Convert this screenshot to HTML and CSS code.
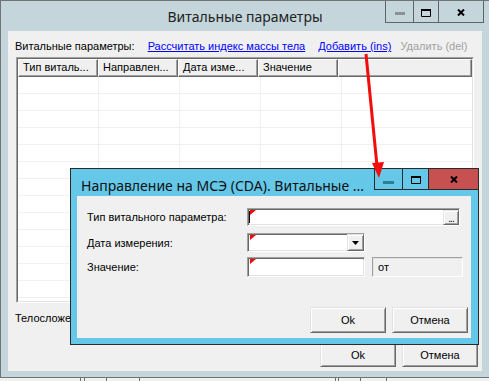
FILE: index.html
```html
<!DOCTYPE html>
<html lang="ru">
<head>
    <meta charset="UTF-8">
    <meta name="viewport" content="width=device-width, initial-scale=1.0">
    <title>Витальные параметры</title>
    <link rel="stylesheet" href="styles.css">
</head>
<body>
    <div class="window">
        <div class="titlebar">
            <div class="title">Витальные параметры</div>
            <div class="caption">
                <span class="cbtn cmin"><svg width="10" height="3"><rect width="10" height="3" fill="#8b9195"/></svg></span>
                <span class="cbtn cmax"><svg width="10" height="8"><path d="M0.5 1h9v6.5h-9z" fill="none" stroke="#000" stroke-width="1"/><rect width="10" height="2"/></svg></span>
                <span class="cbtn cclose"><svg width="8" height="7"><path d="M1 0.5l6 6M7 0.5l-6 6" stroke="#000" stroke-width="2"/></svg></span>
            </div>
        </div>

        <div class="client">
            <div class="toolbar">
                <span>Витальные параметры:</span>
                <a href="#" class="link">Рассчитать индекс массы тела</a>
                <a href="#" class="link">Добавить (ins)</a>
                <span class="disabled">Удалить (del)</span>
            </div>

            <div class="listview">
                <div class="lv-inner">
                    <div class="lv-head">
                        <div class="th">Тип виталь...</div>
                        <div class="th">Направлен...</div>
                        <div class="th">Дата изме...</div>
                        <div class="th">Значение</div>
                        <div class="th th-fill"></div>
                    </div>
                    <div class="lv-body">
                        <div class="col"></div>
                        <div class="col"></div>
                        <div class="col"></div>
                        <div class="col"></div>
                    </div>
                </div>
            </div>

            <div class="build">Телосложение:</div>

            <div class="actions">
                <button class="btn">Ok</button>
                <button class="btn">Отмена</button>
            </div>
        </div>
    </div>

    <div class="strip">
        <span style="width:80px"></span>
        <span style="width:3px"></span>
        <span style="width:21px"></span>
        <span style="width:32px"></span>
        <span style="width:195px"></span>
        <span style="width:2px"></span>
        <span style="width:21px"></span>
        <span style="width:25px"></span>
    </div>

    <div class="dialog">
        <div class="dlg-titlebar">
            <div class="dlg-title">Направление на МСЭ (CDA). Витальные ...</div>
            <div class="caption dlg-caption">
                <span class="cbtn cmin"><svg width="11" height="3"><rect width="11" height="3" fill="#2f7f98"/></svg></span>
                <span class="cbtn cmax"><svg width="10" height="8"><path d="M0.5 1h9v6.5h-9z" fill="none" stroke="#000" stroke-width="1"/><rect width="10" height="2"/></svg></span>
                <span class="cbtn cclose"><svg width="8" height="7"><path d="M1 0.5l6 6M7 0.5l-6 6" stroke="#000" stroke-width="2"/></svg></span>
            </div>
        </div>

        <div class="dlg-client">
            <div class="row r1">
                <label>Тип витального параметра:</label>
                <div class="field wide">
                    <span class="caret"></span>
                    <span class="dots">...</span>
                </div>
            </div>
            <div class="row r2">
                <label>Дата измерения:</label>
                <div class="field short">
                    <span class="drop"><svg width="7" height="4"><path d="M0 0h7l-3.5 4z"/></svg></span>
                </div>
            </div>
            <div class="row r3">
                <label>Значение:</label>
                <div class="field short"></div>
                <div class="unit">от</div>
            </div>
            <div class="dlg-actions">
                <button class="btn">Ok</button>
                <button class="btn">Отмена</button>
            </div>
        </div>
    </div>

    <svg class="arrow" width="489" height="381">
        <line x1="366" y1="54" x2="377" y2="166" stroke="#f20d0d" stroke-width="3"/>
        <path d="M372 163 L384 162 L379 178 Z" fill="#f20d0d"/>
    </svg>
</body>
</html>
```

FILE: styles.css
```css
body {
    margin: 0;
    width: 489px;
    height: 381px;
    overflow: hidden;
    position: relative;
    background-color: #f0f0f0;
    font-family: "Liberation Sans", Arial, sans-serif;
    font-size: 11px;
    color: #000;
}

.window {
    width: 490px;
    height: 378px;
    box-sizing: border-box;
    border: 1px solid #6e7477;
    background-color: #c4d6dc;
    padding: 0 7px 6px 7px;
    display: flex;
    flex-direction: column;
}

.titlebar {
    height: 30px;
    display: grid;
    flex-shrink: 0;
}

.title,
.titlebar .caption {
    grid-area: 1 / 1;
}

.title {
    text-align: center;
    font-family: "Noto Sans", sans-serif;
    font-size: 14px;
    line-height: 20px;
    padding-top: 6px;
    color: #222;
}

/* caption buttons */
.caption {
    justify-self: end;
    align-self: start;
    display: flex;
    height: 21px;
    border: 1px solid #5d6468;
    border-top: none;
    margin-right: -2px;
}

.cbtn {
    display: flex;
    justify-content: center;
    align-items: flex-start;
    border-left: 1px solid #5d6468;
}

.cbtn:first-child {
    border-left: none;
}

.cbtn svg {
    display: block;
}

.cmin {
    width: 27px;
    padding-top: 11px;
    box-sizing: border-box;
}

.cmax {
    width: 25px;
    padding-top: 8px;
    box-sizing: border-box;
}

.cclose {
    width: 45px;
    padding-top: 8px;
    box-sizing: border-box;
}

/* main client area */
.client {
    flex: 1;
    background-color: #f0f0f0;
    display: flex;
    flex-direction: column;
}

.toolbar {
    padding: 9px 0 0 7px;
    line-height: 13px;
    height: 13px;
    white-space: nowrap;
}

.toolbar .link {
    margin-left: 10px;
}

.toolbar .disabled {
    margin-left: 6px;
    color: #a0a0a0;
}

.link {
    color: #0000ff;
    text-decoration: underline;
}

.listview {
    margin: 4px 0 0 8px;
    width: 458px;
    height: 246px;
    box-sizing: border-box;
    border: 1px solid;
    border-color: #a0a0a0 #ffffff #ffffff #a0a0a0;
}

.lv-inner {
    height: 100%;
    box-sizing: border-box;
    border: 1px solid;
    border-color: #696969 #e3e3e3 #e3e3e3 #696969;
    background-color: #fff;
    display: flex;
    flex-direction: column;
}

.lv-head {
    display: flex;
    height: 18px;
    flex-shrink: 0;
}

.th {
    width: 80px;
    box-sizing: border-box;
    background-color: #f0f0f0;
    border-top: 1px solid #fff;
    border-left: 1px solid #fff;
    border-right: 1px solid #696969;
    border-bottom: 1px solid #696969;
    box-shadow: inset -1px -1px #a0a0a0;
    padding-left: 4px;
    line-height: 15px;
    white-space: nowrap;
    overflow: hidden;
}

.th-fill {
    flex: 1;
}

.lv-body {
    flex: 1;
    display: flex;
    background: repeating-linear-gradient(#fff 0 16px, #f0f0f0 16px 17px);
    background-position: 0 0;
}

.col {
    width: 80px;
    border-right: 1px solid #f0f0f0;
}

.build {
    margin: 9px 0 0 7px;
    line-height: 13px;
}

.actions {
    margin-top: 18px;
    display: flex;
    justify-content: flex-end;
    gap: 6px;
    padding-right: 4px;
}

.actions .btn {
    height: 24px;
}

.btn {
    width: 76px;
    height: 26px;
    padding: 0;
    font-family: "Liberation Sans", Arial, sans-serif;
    font-size: 11px;
    color: #000;
    background-color: #f0f0f0;
    border: 1px solid;
    border-color: #e3e3e3 #696969 #696969 #e3e3e3;
    box-shadow: inset 1px 1px #fff, inset -1px -1px #a0a0a0;
}

.strip {
    display: flex;
    height: 3px;
    background-color: #f0f0f0;
}

.strip span {
    border-right: 1px solid #6d6d6d;
}

/* dialog window */
.dialog {
    position: absolute;
    left: 70px;
    top: 168px;
    width: 409px;
    height: 177px;
    box-sizing: border-box;
    border: 1px solid #2a2a2a;
    background-color: #66c8e9;
    padding: 0 7px 6px 6px;
    display: flex;
    flex-direction: column;
}

.dlg-titlebar {
    height: 27px;
    display: grid;
    flex-shrink: 0;
}

.dlg-title,
.dlg-caption {
    grid-area: 1 / 1;
}

.dlg-title {
    font-family: "Noto Sans", sans-serif;
    font-size: 14px;
    line-height: 20px;
    padding: 7px 0 0 4px;
    white-space: nowrap;
    color: #111;
}

.dlg-caption {
    height: 20px;
    border: 1px solid #2a2a2a;
    border-right: none;
    margin: -1px -7px 0 0;
}

.dlg-caption .cbtn {
    border-color: #2a2a2a;
}

.dlg-caption .cmin {
    width: 27px;
    padding-top: 12px;
}

.dlg-caption .cmax {
    width: 26px;
    padding-top: 7px;
}

.dlg-caption .cclose {
    width: 50px;
    padding-top: 7px;
    background-color: #c75050;
}

.dlg-client {
    flex: 1;
    background-color: #f0f0f0;
    display: flex;
    flex-direction: column;
}

.row {
    display: flex;
    align-items: center;
    padding-left: 10px;
}

.row label {
    width: 160px;
    flex-shrink: 0;
}

.r1 {
    margin-top: 12px;
    height: 18px;
}

.r2 {
    margin-top: 7px;
    height: 19px;
}

.r3 {
    margin-top: 5px;
    height: 20px;
}

.field {
    position: relative;
    height: 100%;
    box-sizing: border-box;
    background-color: #fff;
    border: 1px solid;
    border-color: #a0a0a0 #ffffff #ffffff #a0a0a0;
    box-shadow: inset 1px 1px #696969, inset -1px -1px #e3e3e3;
    display: flex;
    align-items: center;
}

.field::before {
    content: "";
    position: absolute;
    left: 2px;
    top: 1px;
    border-top: 5px solid #ff0000;
    border-right: 6px solid transparent;
}

.wide {
    width: 213px;
}

.short {
    width: 118px;
}

.caret {
    width: 1px;
    height: 12px;
    margin-left: 1px;
    background-color: #000;
}

.dots,
.drop {
    margin-left: auto;
    box-sizing: border-box;
    background-color: #f0f0f0;
    border: 1px solid;
    border-color: #e3e3e3 #696969 #696969 #e3e3e3;
    box-shadow: inset 1px 1px #fff, inset -1px -1px #a0a0a0;
}

.dots {
    width: 16px;
    height: 15px;
    margin-right: 0;
    font-size: 10px;
    line-height: 16px;
    text-align: center;
    letter-spacing: -1px;
}

.drop {
    width: 17px;
    height: 17px;
    margin-right: 0;
    display: flex;
    align-items: center;
    justify-content: center;
    padding-top: 1px;
}

.unit {
    width: 91px;
    height: 100%;
    margin-left: 7px;
    box-sizing: border-box;
    border: 1px solid;
    border-color: #a0a0a0 #ffffff #ffffff #a0a0a0;
    box-shadow: inset 1px 1px #e3e3e3;
    padding-left: 5px;
    line-height: 18px;
}

.dlg-actions {
    margin-top: 30px;
    display: flex;
    justify-content: flex-end;
    gap: 6px;
    padding-right: 3px;
}

.arrow {
    position: absolute;
    left: 0;
    top: 0;
    pointer-events: none;
}
```
